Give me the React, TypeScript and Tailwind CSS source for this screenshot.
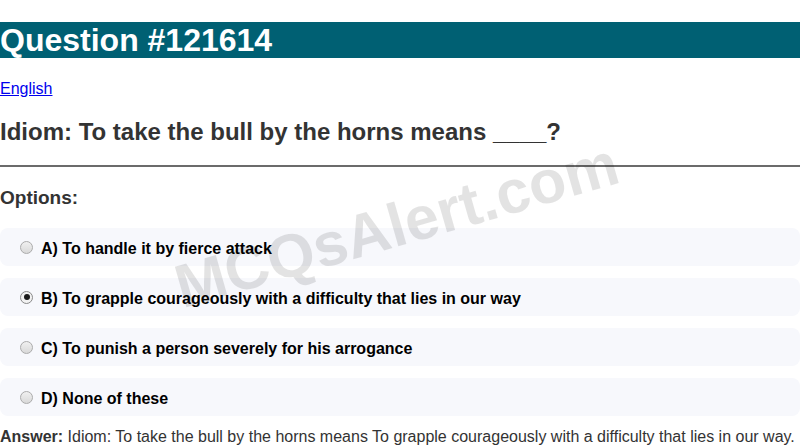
const options = [
  { key: "A", text: "To handle it by fierce attack", checked: false },
  { key: "B", text: "To grapple courageously with a difficulty that lies in our way", checked: true },
  { key: "C", text: "To punish a person severely for his arrogance", checked: false },
  { key: "D", text: "None of these", checked: false },
];

function Radio({ checked }: { checked: boolean }) {
  if (checked) {
    return (
      <span className="w-[13px] h-[13px] rounded-full border border-[#8a8a8a] bg-[#f2f2f2] flex items-center justify-center shrink-0">
        <span className="w-[6px] h-[6px] rounded-full bg-[#1a1a1a]" />
      </span>
    );
  }
  return (
    <span className="w-[13px] h-[13px] rounded-full border border-[#ababab] bg-gradient-to-b from-[#f0f0f0] to-[#d9d9d9] shrink-0" />
  );
}

export default function App() {
  return (
    <div className="relative h-[446px] overflow-hidden bg-white font-['Liberation_Sans',Arial,sans-serif]">
      <h1 className="mt-[22px] bg-[#006073] text-white text-[32px] leading-[36px] font-bold">
        Question #121614
      </h1>

      <p className="mt-[22px] text-[16px] leading-[18px]">
        <a href="#" className="text-[#0000ee] underline">
          English
        </a>
      </p>

      <h2 className="mt-[20px] text-[24px] leading-[28px] font-bold text-[#333333]">
        Idiom: To take the bull by the horns means ____?
      </h2>

      <div className="mt-[19px] h-[2px] bg-[#6b6b6b]" />

      <h3 className="mt-[19px] text-[19px] leading-[23px] font-bold text-[#333333]">Options:</h3>

      <div className="mt-[19px]">
        {options.map((o) => (
          <label
            key={o.key}
            className="mb-[12px] h-[38px] rounded-lg bg-[#f7f8fc] flex items-center pl-[20px] text-[16px] font-bold text-black"
          >
            <Radio checked={o.checked} />
            <span className="ml-[8px] pt-[3px]">
              {o.key}) {o.text}
            </span>
          </label>
        ))}
      </div>

      <p className="mt-[1px] text-[16px] leading-[18px] text-[#333333]">
        <strong>Answer:</strong> Idiom: To take the bull by the horns means To grapple courageously with a
        difficulty that lies in our way.
      </p>

      {/* watermark */}
      <div className="pointer-events-none absolute inset-0 flex items-center justify-center">
        <span className="mt-[6px] -ml-[6px] rotate-[-16deg] text-[61px] font-bold text-[rgba(0,0,0,0.11)] whitespace-nowrap">
          MCQsAlert.com
        </span>
      </div>
    </div>
  );
}
